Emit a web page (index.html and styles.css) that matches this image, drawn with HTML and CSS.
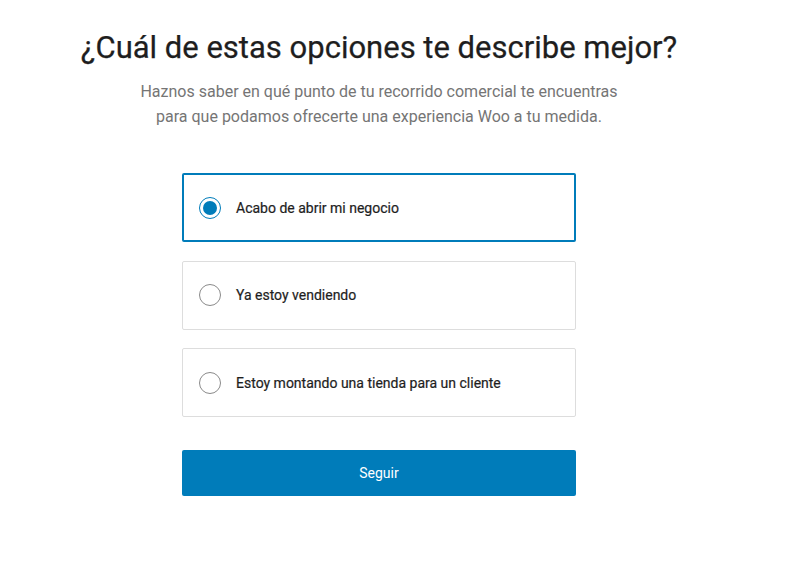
FILE: index.html
```html
<!DOCTYPE html>
<html lang="es">
<head>
<meta charset="utf-8">
<title>Perfil</title>
<link rel="stylesheet" href="styles.css">
</head>
<body>
<main class="page">
  <h1 class="title">¿Cuál de estas opciones te describe mejor?</h1>
  <p class="subtitle">Haznos saber en qué punto de tu recorrido comercial te encuentras<br>para que podamos ofrecerte una experiencia Woo a tu medida.</p>
  <div class="options">
    <label class="option is-selected">
      <span class="radio"><span class="dot"></span></span>
      <span class="label">Acabo de abrir mi negocio</span>
    </label>
    <label class="option">
      <span class="radio"></span>
      <span class="label">Ya estoy vendiendo</span>
    </label>
    <label class="option">
      <span class="radio"></span>
      <span class="label">Estoy montando una tienda para un cliente</span>
    </label>
    <button class="continue" type="button">Seguir</button>
  </div>
</main>
</body>
</html>
```

FILE: styles.css
```css
html, body {
  margin: 0;
  padding: 0;
  background: #ffffff;
}
body {
  font-family: Roboto, "Noto Sans", "Liberation Sans", sans-serif;
  color: #1e1e1e;
}
.page {
  width: 758px;
  display: flex;
  flex-direction: column;
  align-items: center;
  padding-top: 28px;
}
.title {
  margin: 0;
  font-size: 31px;
  line-height: 40px;
  font-weight: 400;
  letter-spacing: 0;
  color: #1e1e1e;
  -webkit-text-stroke: 0.25px #1e1e1e;
}
.subtitle {
  margin: 11px 0 0;
  font-size: 16px;
  line-height: 25px;
  color: #757575;
  text-align: center;
  font-weight: 400;
}
.options {
  width: 394px;
  margin-top: 44px;
  display: flex;
  flex-direction: column;
}
.option {
  box-sizing: border-box;
  height: 69px;
  margin-bottom: 18.5px;
  border: 1px solid #dddddd;
  border-radius: 2px;
  display: flex;
  align-items: center;
  padding-left: 16px;
}
.option.is-selected {
  border: 2px solid #007cba;
  padding-left: 15px;
}
.radio {
  box-sizing: border-box;
  width: 22px;
  height: 22px;
  border-radius: 50%;
  border: 1px solid #8a8a8a;
  display: flex;
  align-items: center;
  justify-content: center;
  flex-shrink: 0;
}
.is-selected .radio {
  border: 1.5px solid #007cba;
}
.dot {
  width: 14px;
  height: 14px;
  border-radius: 50%;
  background: #007cba;
}
.label {
  margin-left: 15px;
  font-size: 14px;
  font-weight: 400;
  color: #1e1e1e;
  -webkit-text-stroke: 0.2px #1e1e1e;
}
.continue {
  margin-top: 14px;
  height: 46px;
  border: 0;
  border-radius: 2px;
  background: #007cba;
  color: #ffffff;
  font-family: inherit;
  font-size: 14px;
  font-weight: 400;
}
```
